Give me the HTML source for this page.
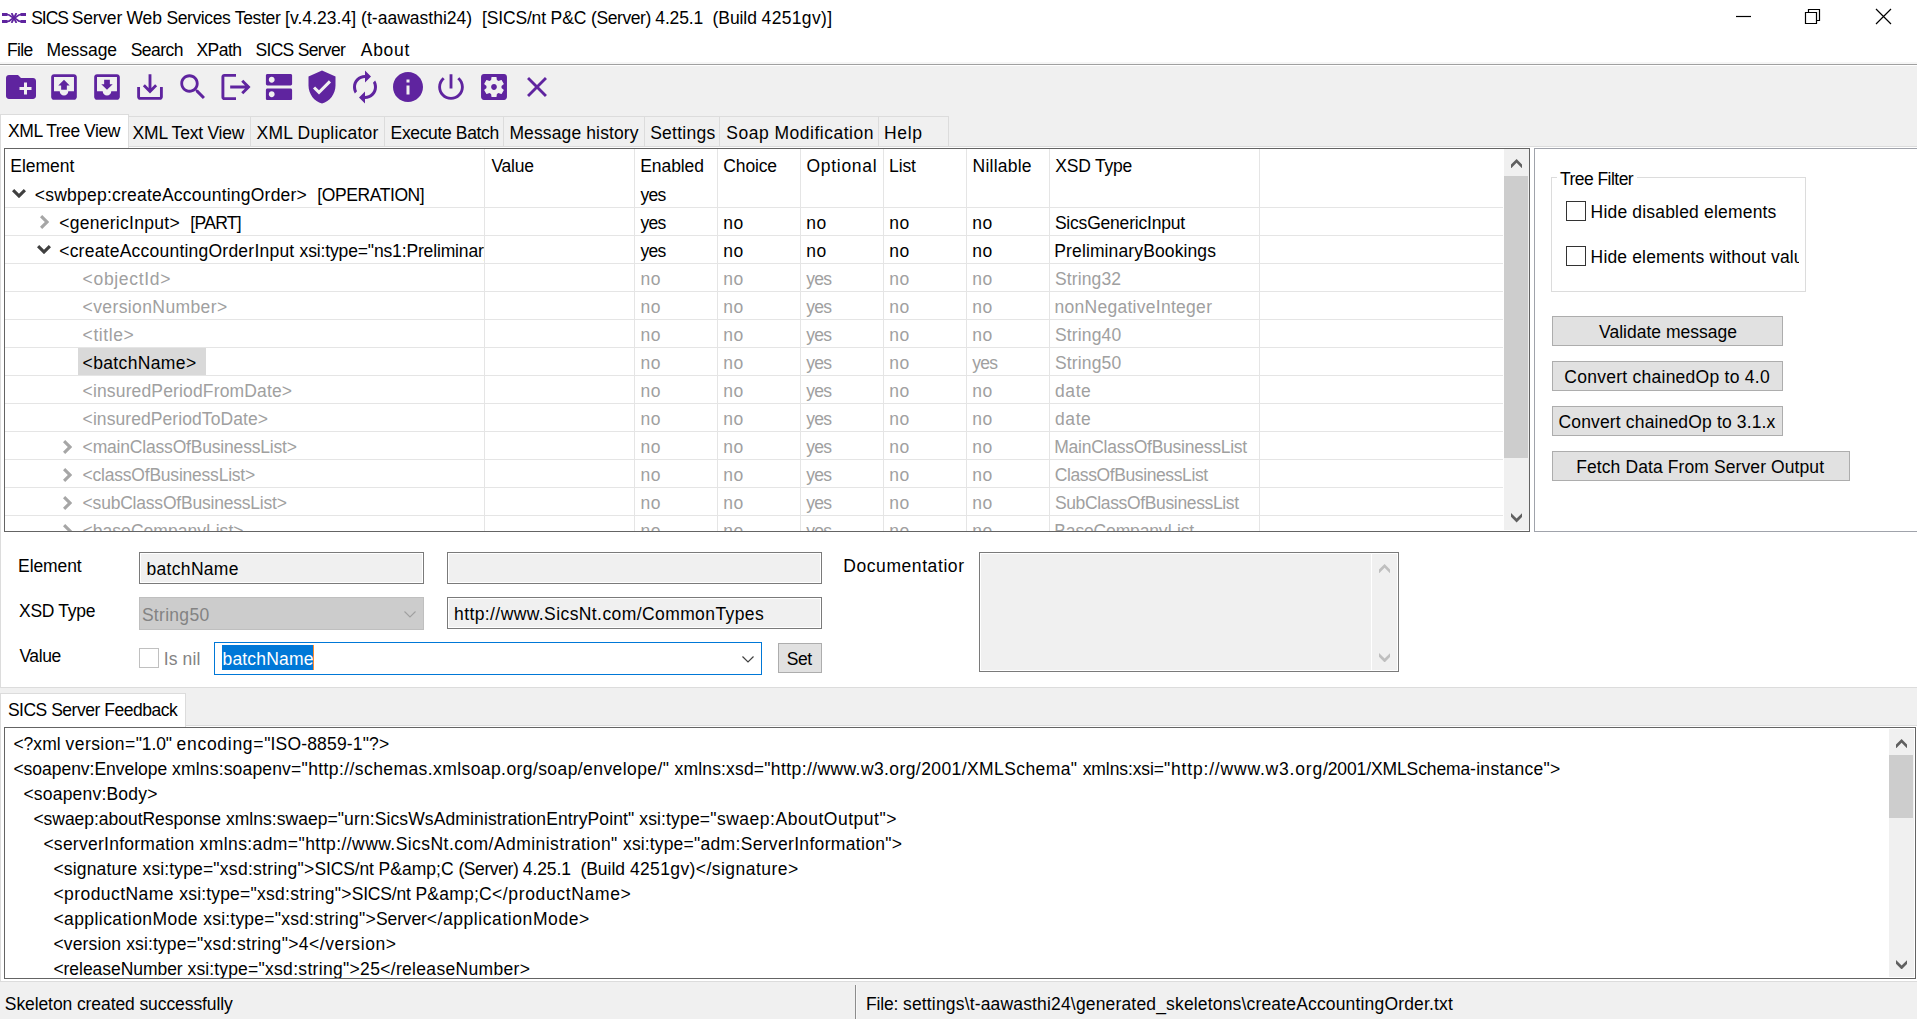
<!DOCTYPE html>
<html lang="en"><head><meta charset="utf-8"><title>SICS Server Web Services Tester</title>
<style>
*{box-sizing:border-box;margin:0;padding:0}
html,body{width:1917px;height:1019px;overflow:hidden;background:#f0f0f0}
body{position:relative;font-family:"Liberation Sans",Arial,sans-serif;font-size:17.5px;line-height:20px;color:#000}
.a{position:absolute;display:block}
.t{position:absolute;white-space:pre;line-height:20px;height:20px}
.ic{position:absolute;top:69px;width:36px;height:36px;fill:#5f249f}
.hl{position:absolute;left:5px;width:1498px;height:1px;background:#e5e5e5}
.vl{position:absolute;top:149px;width:1px;height:382px;background:#e5e5e5}
.tab{position:absolute;top:116px;height:31px;background:#f0f0f0;border:1px solid #dcdcdc}
.btn{position:absolute;background:#e1e1e1;border:1px solid #adadad}
.inp{position:absolute;background:#f0f0f0;border:1px solid #7a7a7a;box-shadow:inset 0 0 0 1px #fff}
.cb{position:absolute;width:20px;height:20px;background:#fff;border:1px solid #333}
.clip{position:absolute;overflow:hidden}
.org{position:absolute;left:0;top:0}
</style></head><body>
<!-- title bar + menu bar -->
<div class="a" style="left:0;top:0;width:1917px;height:64px;background:#fff"></div>
<div class="a" style="left:0;top:62px;width:1917px;height:2px;background:#f6f6f6"></div>
<div class="a" style="left:0;top:64px;width:1917px;height:2px;background:#fff;border-top:1px solid #a0a0a0"></div>
<svg class="a" style="left:2px;top:13px" width="24" height="10" viewBox="0 0 24 10"><g fill="none" stroke="#5f249f"><path d="M0 1.500H5.500M0 8.500H5.500M24 1.500H18.500M24 8.500H18.500" stroke-width="3"/><path d="M5 1.500C9 1.500 9 5 12 5S15 8.500 19 8.500M5 8.500C9 8.500 9 5 12 5S15 1.500 19 1.500" stroke-width="1.700"/><path d="M9.600 0L14.400 10M14.400 0L9.600 10" stroke-width="1.800"/></g></svg>
<svg class="a" style="left:1735px;top:8px" width="160" height="18" viewBox="0 0 160 18"><g fill="none" stroke="#000" stroke-width="1.2"><path d="M1 8.5h15"/><path d="M70.5 4.5h11v11h-11zM73.5 4.5v-3h11v11h-3"/><path d="M141 1l15 15M156 1l-15 15"/></g></svg>
<!-- toolbar -->
<svg class="ic" style="left:3px" viewBox="0.00 0.00 24.00 24.00"><path d="M20 6h-8l-2-2H4c-1.11 0-1.99.89-1.99 2L2 18c0 1.11.89 2 2 2h16c1.11 0 2-.89 2-2V8c0-1.11-.89-2-2-2zm-1 8h-3v3h-2v-3h-3v-2h3V9h2v3h3v2z"/></svg>
<svg class="ic" style="left:46px" viewBox="-0.63 -0.63 25.26 25.26"><path d="M19 3H4.99c-1.11 0-1.98.9-1.98 2L3 19c0 1.1.88 2 1.99 2H19c1.1 0 2-.9 2-2V5c0-1.1-.9-2-2-2zm0 12h-4c0 1.66-1.35 3-3 3s-3-1.34-3-3H4.99V5H19v10zM8 11h2v3h4v-3h2l-4-4-4 4z"/></svg>
<svg class="ic" style="left:89px" viewBox="-0.63 -0.63 25.26 25.26"><path d="M19 3H4.99c-1.11 0-1.98.9-1.98 2L3 19c0 1.1.88 2 1.99 2H19c1.1 0 2-.9 2-2V5c0-1.1-.9-2-2-2zm0 12h-4c0 1.66-1.35 3-3 3s-3-1.34-3-3H4.99V5H19v10zm-3-5h-2V7h-4v3H8l4 4 4-4z"/></svg>
<svg class="ic" style="left:132px" viewBox="-0.63 -0.63 25.26 25.26"><path d="M19 12v7H5v-7H3v7c0 1.1.9 2 2 2h14c1.1 0 2-.9 2-2v-7h-2zm-6 .67l2.59-2.58L17 11.5l-5 5-5-5 1.41-1.41L11 12.67V3h2z"/></svg>
<svg class="ic" style="left:175px" viewBox="-0.77 -0.77 25.53 25.53"><path d="M15.5 14h-.79l-.28-.27C15.41 12.59 16 11.11 16 9.5 16 5.91 13.09 3 9.5 3S3 5.91 3 9.5 5.91 16 9.5 16c1.61 0 3.09-.59 4.23-1.57l.27.28v.79l5 4.99L20.49 19l-4.99-5zm-6 0C7.01 14 5 11.99 5 9.5S7.01 5 9.5 5 14 7.01 14 9.5 11.99 14 9.5 14z"/></svg>
<svg class="ic" style="left:218px" viewBox="-0.37 -0.37 24.74 24.74"><path d="M17 7l-1.41 1.41L18.17 11H8v2h10.17l-2.58 2.58L17 17l5-5zM4 5h8V3H4c-1.1 0-2 .9-2 2v14c0 1.1.9 2 2 2h8v-2H4V5z"/></svg>
<svg class="ic" style="left:261px" viewBox="-0.37 -0.37 24.74 24.74"><path d="M20 13H4c-.55 0-1 .45-1 1v6c0 .55.45 1 1 1h16c.55 0 1-.45 1-1v-6c0-.55-.45-1-1-1zM7 19c-1.1 0-2-.9-2-2s.9-2 2-2 2 .9 2 2-.9 2-2 2zM20 3H4c-.55 0-1 .45-1 1v6c0 .55.45 1 1 1h16c.55 0 1-.45 1-1V4c0-.55-.45-1-1-1zM7 9c-1.1 0-2-.9-2-2s.9-2 2-2 2 .9 2 2-.9 2-2 2z"/></svg>
<svg class="ic" style="left:304px" viewBox="0.00 0.00 24.00 24.00"><path d="M12 1L3 5v6c0 5.55 3.84 10.74 9 12 5.16-1.26 9-6.45 9-12V5l-9-4zm-2 16l-4-4 1.41-1.41L10 14.17l6.59-6.59L18 9l-8 8z"/></svg>
<svg class="ic" style="left:347px" viewBox="0.00 0.00 24.00 24.00"><path d="M12 6v3l4-4-4-4v3c-4.42 0-8 3.58-8 8 0 1.57.46 3.03 1.24 4.26L6.7 14.8c-.45-.83-.7-1.79-.7-2.8 0-3.31 2.69-6 6-6zm6.76 1.74L17.3 9.2c.44.84.7 1.79.7 2.8 0 3.31-2.69 6-6 6v-3l-4 4 4 4v-3c4.42 0 8-3.58 8-8 0-1.57-.46-3.03-1.24-4.26z"/></svg>
<svg class="ic" style="left:390px" viewBox="0.00 0.00 24.00 24.00"><path d="M12 2C6.48 2 2 6.48 2 12s4.48 10 10 10 10-4.48 10-10S17.52 2 12 2zm1 15h-2v-6h2v6zm0-8h-2V7h2v2z"/></svg>
<svg class="ic" style="left:433px" viewBox="-0.63 -0.63 25.26 25.26"><path d="M13 3h-2v10h2V3zm4.83 2.17l-1.42 1.42C17.99 7.86 19 9.81 19 12c0 3.87-3.13 7-7 7s-7-3.13-7-7c0-2.19 1.01-4.14 2.58-5.42L6.17 5.17C4.23 6.82 3 9.26 3 12c0 4.97 4.03 9 9 9s9-4.03 9-9c0-2.74-1.23-5.18-3.17-6.83z"/></svg>
<svg class="ic" style="left:476px" viewBox="-0.50 -0.50 25.00 25.00"><path d="M12 10c-1.1 0-2 .9-2 2s.9 2 2 2 2-.9 2-2-.9-2-2-2zm7-7H5c-1.11 0-2 .9-2 2v14c0 1.1.89 2 2 2h14c1.11 0 2-.9 2-2V5c0-1.1-.89-2-2-2zm-1.750 9c0 .23-.02.46-.05.68l1.48 1.16c.13.11.17.3.08.45l-1.400 2.420c-.09.15-.27.21-.43.15l-1.74-.7c-.36.28-.76.51-1.18.69l-.26 1.850c-.03.17-.18.3-.35.3h-2.800c-.17 0-.32-.13-.35-.29l-.26-1.850c-.43-.18-.82-.41-1.18-.69l-1.74.7c-.16.06-.34 0-.43-.15l-1.400-2.420c-.09-.15-.05-.34.08-.45l1.48-1.160c-.03-.23-.05-.46-.05-.69 0-.23.02-.46.05-.68l-1.480-1.160c-.13-.11-.17-.3-.08-.45l1.400-2.420c.09-.15.27-.21.43-.15l1.74.7c.36-.28.76-.51 1.180-.69l.26-1.850c.03-.17.18-.3.35-.3h2.800c.17 0 .32.13.35.29l.26 1.850c.43.18.82.41 1.180.69l1.740-.7c.16-.06.34 0 .43.15l1.400 2.420c.09.15.05.34-.08.45l-1.480 1.160c.03.23.05.46.05.69z"/></svg>
<svg class="ic" style="left:519px" viewBox="-0.63 -0.63 25.26 25.26"><path d="M19 6.41L17.59 5 12 10.59 6.41 5 5 6.41 10.59 12 5 17.59 6.41 19 12 13.41 17.59 19 19 17.59 13.41 12z"/></svg>
<!-- upper tab control -->
<div class="a" style="left:0;top:146px;width:1917px;height:542px;background:#fff;border:1px solid #dcdcdc;border-right:none"></div>
<div class="tab" style="left:128px;width:123px"></div><div class="tab" style="left:250px;width:135px"></div><div class="tab" style="left:384px;width:120px"></div><div class="tab" style="left:503px;width:142px"></div><div class="tab" style="left:644px;width:76px"></div><div class="tab" style="left:719px;width:160px"></div><div class="tab" style="left:878px;width:71px"></div>
<div class="a" style="left:0;top:114px;width:129px;height:34px;background:#fff;border:1px solid #dcdcdc;border-bottom:none"></div>
<!-- tree panel -->
<div class="a" style="left:4px;top:148px;width:1526px;height:384px;border:1px solid #646464"></div>
<div class="clip" style="left:5px;top:149px;width:1499px;height:382px"><div class="org" style="left:-5px;top:-149px"><div class="hl" style="top:207px"></div><div class="hl" style="top:235px"></div><div class="hl" style="top:263px"></div><div class="hl" style="top:291px"></div><div class="hl" style="top:319px"></div><div class="hl" style="top:347px"></div><div class="hl" style="top:375px"></div><div class="hl" style="top:403px"></div><div class="hl" style="top:431px"></div><div class="hl" style="top:459px"></div><div class="hl" style="top:487px"></div><div class="hl" style="top:515px"></div><div class="vl" style="left:484px"></div><div class="vl" style="left:634px"></div><div class="vl" style="left:717px"></div><div class="vl" style="left:800px"></div><div class="vl" style="left:883px"></div><div class="vl" style="left:966px"></div><div class="vl" style="left:1049px"></div><div class="vl" style="left:1259px"></div>
<div class="a" style="left:78px;top:348px;width:128px;height:27px;background:#d9d9d9"></div>
<svg class="a" style="left:12.10px;top:189.20px" width="14" height="9.2" viewBox="0 0 14 9.2"><polygon points="0,2.2 2.2,0 7,4.8 11.8,0 14,2.2 7,9.2" fill="#404040"/></svg><svg class="a" style="left:39.70px;top:215.40px" width="9.2" height="14" viewBox="0 0 9.2 14"><polygon points="2.2,0 0,2.2 4.8,7 0,11.8 2.2,14 9.2,7" fill="#a6a6a6"/></svg><svg class="a" style="left:36.60px;top:245.30px" width="14" height="9.2" viewBox="0 0 14 9.2"><polygon points="0,2.2 2.2,0 7,4.8 11.8,0 14,2.2 7,9.2" fill="#404040"/></svg>
<svg class="a" style="left:63.30px;top:439.60px" width="9.2" height="14" viewBox="0 0 9.2 14"><polygon points="2.2,0 0,2.2 4.8,7 0,11.8 2.2,14 9.2,7" fill="#a6a6a6"/></svg><svg class="a" style="left:63.30px;top:467.60px" width="9.2" height="14" viewBox="0 0 9.2 14"><polygon points="2.2,0 0,2.2 4.8,7 0,11.8 2.2,14 9.2,7" fill="#a6a6a6"/></svg><svg class="a" style="left:63.30px;top:495.60px" width="9.2" height="14" viewBox="0 0 9.2 14"><polygon points="2.2,0 0,2.2 4.8,7 0,11.8 2.2,14 9.2,7" fill="#a6a6a6"/></svg><svg class="a" style="left:63.30px;top:523.60px" width="9.2" height="14" viewBox="0 0 9.2 14"><polygon points="2.2,0 0,2.2 4.8,7 0,11.8 2.2,14 9.2,7" fill="#a6a6a6"/></svg>
</div></div>
<div class="a" style="left:1504px;top:149px;width:25px;height:381px;background:#f0f0f0"></div>
<div class="a" style="left:1504px;top:176px;width:24px;height:282px;background:#cdcdcd"></div>
<svg class="a" style="left:1510.80px;top:158.75px" width="11.2" height="9.45" viewBox="0 0 11.2 9.45"><polygon points="5.6,0 11.2,5.6 11.2,9.45 5.6,3.85 0,9.45 0,5.6" fill="#606060"/></svg><svg class="a" style="left:1510.90px;top:513.45px" width="11.2" height="9.45" viewBox="0 0 11.2 9.45"><polygon points="5.6,9.45 11.2,3.85 11.2,0 5.6,5.6 0,0 0,3.85" fill="#606060"/></svg>
<div class="clip" style="left:5px;top:149px;width:479px;height:382px"><div class="org" style="left:-5px;top:-149px">
<span class="t" style="left:34.8px;top:185px;letter-spacing:0.222px;">&lt;swbpep:createAccountingOrder&gt;  </span>
<span class="t" style="left:317.3px;top:185px;letter-spacing:-0.410px;">[OPERATION]</span>
<span class="t" style="left:59.2px;top:213px;letter-spacing:0.283px;">&lt;genericInput&gt;  </span>
<span class="t" style="left:190.3px;top:213px;letter-spacing:-0.680px;">[PART]</span>
<span class="t" style="left:59.2px;top:241px;letter-spacing:0.228px;">&lt;createAccountingOrderInput </span>
<span class="t" style="left:299.6px;top:241px;letter-spacing:-0.145px;">xsi:type="ns1:PreliminaryBookings"&gt;</span>
<span class="t" style="left:82.6px;top:269px;letter-spacing:0.676px;color:#a0a0a0;">&lt;objectId&gt;</span>
<span class="t" style="left:82.6px;top:297px;letter-spacing:0.393px;color:#a0a0a0;">&lt;versionNumber&gt;</span>
<span class="t" style="left:82.6px;top:325px;letter-spacing:0.588px;color:#a0a0a0;">&lt;title&gt;</span>
<span class="t" style="left:82.6px;top:353px;letter-spacing:0.358px;">&lt;batchName&gt;</span>
<span class="t" style="left:82.6px;top:381px;letter-spacing:0.145px;color:#a0a0a0;">&lt;insuredPeriodFromDate&gt;</span>
<span class="t" style="left:82.6px;top:409px;letter-spacing:0.072px;color:#a0a0a0;">&lt;insuredPeriodToDate&gt;</span>
<span class="t" style="left:82.6px;top:437px;letter-spacing:-0.185px;color:#a0a0a0;">&lt;mainClassOfBusinessList&gt;</span>
<span class="t" style="left:82.6px;top:465px;letter-spacing:-0.221px;color:#a0a0a0;">&lt;classOfBusinessList&gt;</span>
<span class="t" style="left:82.6px;top:493px;letter-spacing:-0.210px;color:#a0a0a0;">&lt;subClassOfBusinessList&gt;</span>
<span class="t" style="left:82.6px;top:521px;letter-spacing:0.024px;color:#a0a0a0;">&lt;baseCompanyList&gt;</span>
</div></div>
<div class="clip" style="left:485px;top:149px;width:1019px;height:382px"><div class="org" style="left:-485px;top:-149px">
<span class="t" style="left:640.4px;top:185px;letter-spacing:-0.700px;">yes</span>
<span class="t" style="left:640.4px;top:213px;letter-spacing:-0.700px;">yes</span>
<span class="t" style="left:723.2px;top:213px;letter-spacing:0.700px;">no</span>
<span class="t" style="left:806.2px;top:213px;letter-spacing:0.700px;">no</span>
<span class="t" style="left:889.2px;top:213px;letter-spacing:0.700px;">no</span>
<span class="t" style="left:972.2px;top:213px;letter-spacing:0.700px;">no</span>
<span class="t" style="left:1054.9px;top:213px;letter-spacing:-0.203px;">SicsGenericInput</span>
<span class="t" style="left:640.4px;top:241px;letter-spacing:-0.700px;">yes</span>
<span class="t" style="left:723.2px;top:241px;letter-spacing:0.700px;">no</span>
<span class="t" style="left:806.2px;top:241px;letter-spacing:0.700px;">no</span>
<span class="t" style="left:889.2px;top:241px;letter-spacing:0.700px;">no</span>
<span class="t" style="left:972.2px;top:241px;letter-spacing:0.700px;">no</span>
<span class="t" style="left:1054.3px;top:241px;letter-spacing:0.120px;">PreliminaryBookings</span>
<span class="t" style="left:640.4px;top:269px;letter-spacing:0.700px;color:#a0a0a0;">no</span>
<span class="t" style="left:723.2px;top:269px;letter-spacing:0.700px;color:#a0a0a0;">no</span>
<span class="t" style="left:806.2px;top:269px;letter-spacing:-0.700px;color:#a0a0a0;">yes</span>
<span class="t" style="left:889.2px;top:269px;letter-spacing:0.700px;color:#a0a0a0;">no</span>
<span class="t" style="left:972.2px;top:269px;letter-spacing:0.700px;color:#a0a0a0;">no</span>
<span class="t" style="left:1054.9px;top:269px;letter-spacing:0.141px;color:#a0a0a0;">String32</span>
<span class="t" style="left:640.4px;top:297px;letter-spacing:0.700px;color:#a0a0a0;">no</span>
<span class="t" style="left:723.2px;top:297px;letter-spacing:0.700px;color:#a0a0a0;">no</span>
<span class="t" style="left:806.2px;top:297px;letter-spacing:-0.700px;color:#a0a0a0;">yes</span>
<span class="t" style="left:889.2px;top:297px;letter-spacing:0.700px;color:#a0a0a0;">no</span>
<span class="t" style="left:972.2px;top:297px;letter-spacing:0.700px;color:#a0a0a0;">no</span>
<span class="t" style="left:1054.5px;top:297px;letter-spacing:0.277px;color:#a0a0a0;">nonNegativeInteger</span>
<span class="t" style="left:640.4px;top:325px;letter-spacing:0.700px;color:#a0a0a0;">no</span>
<span class="t" style="left:723.2px;top:325px;letter-spacing:0.700px;color:#a0a0a0;">no</span>
<span class="t" style="left:806.2px;top:325px;letter-spacing:-0.700px;color:#a0a0a0;">yes</span>
<span class="t" style="left:889.2px;top:325px;letter-spacing:0.700px;color:#a0a0a0;">no</span>
<span class="t" style="left:972.2px;top:325px;letter-spacing:0.700px;color:#a0a0a0;">no</span>
<span class="t" style="left:1054.9px;top:325px;letter-spacing:0.156px;color:#a0a0a0;">String40</span>
<span class="t" style="left:640.4px;top:353px;letter-spacing:0.700px;color:#a0a0a0;">no</span>
<span class="t" style="left:723.2px;top:353px;letter-spacing:0.700px;color:#a0a0a0;">no</span>
<span class="t" style="left:806.2px;top:353px;letter-spacing:-0.700px;color:#a0a0a0;">yes</span>
<span class="t" style="left:889.2px;top:353px;letter-spacing:0.700px;color:#a0a0a0;">no</span>
<span class="t" style="left:972.2px;top:353px;letter-spacing:-0.700px;color:#a0a0a0;">yes</span>
<span class="t" style="left:1054.9px;top:353px;letter-spacing:0.156px;color:#a0a0a0;">String50</span>
<span class="t" style="left:640.4px;top:381px;letter-spacing:0.700px;color:#a0a0a0;">no</span>
<span class="t" style="left:723.2px;top:381px;letter-spacing:0.700px;color:#a0a0a0;">no</span>
<span class="t" style="left:806.2px;top:381px;letter-spacing:-0.700px;color:#a0a0a0;">yes</span>
<span class="t" style="left:889.2px;top:381px;letter-spacing:0.700px;color:#a0a0a0;">no</span>
<span class="t" style="left:972.2px;top:381px;letter-spacing:0.700px;color:#a0a0a0;">no</span>
<span class="t" style="left:1055.0px;top:381px;letter-spacing:0.583px;color:#a0a0a0;">date</span>
<span class="t" style="left:640.4px;top:409px;letter-spacing:0.700px;color:#a0a0a0;">no</span>
<span class="t" style="left:723.2px;top:409px;letter-spacing:0.700px;color:#a0a0a0;">no</span>
<span class="t" style="left:806.2px;top:409px;letter-spacing:-0.700px;color:#a0a0a0;">yes</span>
<span class="t" style="left:889.2px;top:409px;letter-spacing:0.700px;color:#a0a0a0;">no</span>
<span class="t" style="left:972.2px;top:409px;letter-spacing:0.700px;color:#a0a0a0;">no</span>
<span class="t" style="left:1055.0px;top:409px;letter-spacing:0.583px;color:#a0a0a0;">date</span>
<span class="t" style="left:640.4px;top:437px;letter-spacing:0.700px;color:#a0a0a0;">no</span>
<span class="t" style="left:723.2px;top:437px;letter-spacing:0.700px;color:#a0a0a0;">no</span>
<span class="t" style="left:806.2px;top:437px;letter-spacing:-0.700px;color:#a0a0a0;">yes</span>
<span class="t" style="left:889.2px;top:437px;letter-spacing:0.700px;color:#a0a0a0;">no</span>
<span class="t" style="left:972.2px;top:437px;letter-spacing:0.700px;color:#a0a0a0;">no</span>
<span class="t" style="left:1054.3px;top:437px;letter-spacing:-0.252px;color:#a0a0a0;">MainClassOfBusinessList</span>
<span class="t" style="left:640.4px;top:465px;letter-spacing:0.700px;color:#a0a0a0;">no</span>
<span class="t" style="left:723.2px;top:465px;letter-spacing:0.700px;color:#a0a0a0;">no</span>
<span class="t" style="left:806.2px;top:465px;letter-spacing:-0.700px;color:#a0a0a0;">yes</span>
<span class="t" style="left:889.2px;top:465px;letter-spacing:0.700px;color:#a0a0a0;">no</span>
<span class="t" style="left:972.2px;top:465px;letter-spacing:0.700px;color:#a0a0a0;">no</span>
<span class="t" style="left:1054.8px;top:465px;letter-spacing:-0.398px;color:#a0a0a0;">ClassOfBusinessList</span>
<span class="t" style="left:640.4px;top:493px;letter-spacing:0.700px;color:#a0a0a0;">no</span>
<span class="t" style="left:723.2px;top:493px;letter-spacing:0.700px;color:#a0a0a0;">no</span>
<span class="t" style="left:806.2px;top:493px;letter-spacing:-0.700px;color:#a0a0a0;">yes</span>
<span class="t" style="left:889.2px;top:493px;letter-spacing:0.700px;color:#a0a0a0;">no</span>
<span class="t" style="left:972.2px;top:493px;letter-spacing:0.700px;color:#a0a0a0;">no</span>
<span class="t" style="left:1054.9px;top:493px;letter-spacing:-0.352px;color:#a0a0a0;">SubClassOfBusinessList</span>
<span class="t" style="left:640.4px;top:521px;letter-spacing:0.700px;color:#a0a0a0;">no</span>
<span class="t" style="left:723.2px;top:521px;letter-spacing:0.700px;color:#a0a0a0;">no</span>
<span class="t" style="left:806.2px;top:521px;letter-spacing:-0.700px;color:#a0a0a0;">yes</span>
<span class="t" style="left:889.2px;top:521px;letter-spacing:0.700px;color:#a0a0a0;">no</span>
<span class="t" style="left:972.2px;top:521px;letter-spacing:0.700px;color:#a0a0a0;">no</span>
<span class="t" style="left:1054.3px;top:521px;letter-spacing:-0.155px;color:#a0a0a0;">BaseCompanyList</span>
</div></div>
<!-- right panel -->
<div class="a" style="left:1534px;top:148px;width:390px;height:384px;background:#fff;border:1px solid #a0a3ab"></div>
<div class="a" style="left:1551px;top:177px;width:255px;height:115px;border:1px solid #dcdcdc"></div>
<div class="a" style="left:1557px;top:170px;width:80px;height:20px;background:#fff"></div>
<div class="cb" style="left:1566px;top:201px"></div>
<div class="cb" style="left:1566px;top:246px"></div>
<div class="clip" style="left:1590px;top:240px;width:209px;height:30px"><div class="org" style="left:-1590px;top:-240px"><span class="t" style="left:1590.6px;top:247px;letter-spacing:0.154px;">Hide elements without value</span></div></div>
<div class="btn" style="left:1552px;top:316px;width:231px;height:30px"></div>
<div class="btn" style="left:1552px;top:361px;width:231px;height:30px"></div>
<div class="btn" style="left:1552px;top:406px;width:231px;height:30px"></div>
<div class="btn" style="left:1552px;top:451px;width:298px;height:30px"></div>
<!-- element form -->
<div class="inp" style="left:139px;top:552px;width:285px;height:32px"></div>
<div class="inp" style="left:447px;top:552px;width:375px;height:32px"></div>
<div class="a" style="left:139px;top:597px;width:285px;height:33px;background:#ccc;border:1px solid #bfbfbf"></div>
<svg class="a" style="left:403.25px;top:609.5px" width="14" height="9" viewBox="0 0 14 9"><path d="M1.5 1.5 L7 7 L12.5 1.5" fill="none" stroke="#a0a0a0" stroke-width="1.1"/></svg>
<div class="inp" style="left:447px;top:597px;width:375px;height:32px"></div>
<div class="a" style="left:139px;top:648px;width:20px;height:20px;background:#fff;border:1px solid #c0c0c0"></div>
<div class="a" style="left:214px;top:642px;width:548px;height:33px;background:#fff;border:1px solid #0078d7"></div>
<div class="a" style="left:222px;top:645px;width:92px;height:25px;background:#0078d7;border-right:1px solid #ff8a2a"></div>
<svg class="a" style="left:741.3px;top:654.75px" width="14" height="9" viewBox="0 0 14 9"><path d="M1.5 1.5 L7 7 L12.5 1.5" fill="none" stroke="#404040" stroke-width="1.2"/></svg>
<div class="btn" style="left:778px;top:643px;width:44px;height:30px"></div>
<div class="inp" style="left:979px;top:552px;width:420px;height:120px"></div>
<div class="a" style="left:1371px;top:554px;width:1px;height:116px;background:#fff"></div>
<svg class="a" style="left:1378.90px;top:563.90px" width="11.2" height="9.45" viewBox="0 0 11.2 9.45"><polygon points="5.6,0 11.2,5.6 11.2,9.45 5.6,3.85 0,9.45 0,5.6" fill="#bfbfbf"/></svg><svg class="a" style="left:1378.90px;top:652.55px" width="11.2" height="9.45" viewBox="0 0 11.2 9.45"><polygon points="5.6,9.45 11.2,3.85 11.2,0 5.6,5.6 0,0 0,3.85" fill="#bfbfbf"/></svg>
<!-- lower tab control -->
<div class="a" style="left:0;top:725px;width:1917px;height:257px;background:#fff;border:1px solid #dcdcdc;border-right:none"></div>
<div class="a" style="left:0;top:693px;width:186px;height:34px;background:#fff;border:1px solid #dcdcdc;border-bottom:none"></div>
<div class="a" style="left:4px;top:727px;width:1912px;height:252px;border:1px solid #646464"></div>
<div class="a" style="left:1889px;top:729px;width:25px;height:248px;background:#f0f0f0"></div>
<div class="a" style="left:1889px;top:755px;width:24px;height:63px;background:#cdcdcd"></div>
<svg class="a" style="left:1895.90px;top:738.80px" width="11.2" height="9.45" viewBox="0 0 11.2 9.45"><polygon points="5.6,0 11.2,5.6 11.2,9.45 5.6,3.85 0,9.45 0,5.6" fill="#606060"/></svg><svg class="a" style="left:1895.90px;top:959.55px" width="11.2" height="9.45" viewBox="0 0 11.2 9.45"><polygon points="5.6,9.45 11.2,3.85 11.2,0 5.6,5.6 0,0 0,3.85" fill="#606060"/></svg>
<div class="clip" style="left:5px;top:728px;width:1884px;height:250px"><div class="org" style="left:-5px;top:-728px">
<span class="t" style="left:13.4px;top:734px;letter-spacing:0.012px;">&lt;?xml </span>
<span class="t" style="left:65.5px;top:734px;letter-spacing:0.447px;">version=</span>
<span class="t" style="left:135.8px;top:734px;letter-spacing:-0.137px;">"1.0" </span>
<span class="t" style="left:176.6px;top:734px;letter-spacing:0.704px;">encoding=</span>
<span class="t" style="left:264.2px;top:734px;letter-spacing:0.166px;">"ISO-8859-1"?&gt;</span>
<span class="t" style="left:13.4px;top:759px;letter-spacing:-0.024px;">&lt;soapenv:Envelope </span>
<span class="t" style="left:172.1px;top:759px;letter-spacing:0.171px;">xmlns:soapenv=</span>
<span class="t" style="left:301.5px;top:759px;letter-spacing:0.416px;">"http://schemas.xmlsoap.org/soap/envelope/" </span>
<span class="t" style="left:674.6px;top:759px;letter-spacing:0.154px;">xmlns:xsd=</span>
<span class="t" style="left:764.2px;top:759px;letter-spacing:0.409px;">"http://www.w3.org/2001/XMLSchema" </span>
<span class="t" style="left:1082.7px;top:759px;letter-spacing:-0.092px;">xmlns:xsi=</span>
<span class="t" style="left:1164.0px;top:759px;letter-spacing:0.818px;">"http://www.w3.org</span>
<span class="t" style="left:1323.0px;top:759px;letter-spacing:-0.115px;">/2001/XMLSchema</span>
<span class="t" style="left:1470.1px;top:759px;letter-spacing:0.278px;">-instance"&gt;</span>
<span class="t" style="left:23.4px;top:784px;letter-spacing:0.204px;">&lt;soapenv:Body&gt;</span>
<span class="t" style="left:33.4px;top:809px;letter-spacing:-0.031px;">&lt;swaep:aboutResponse </span>
<span class="t" style="left:225.9px;top:809px;letter-spacing:0.040px;">xmlns:swaep=</span>
<span class="t" style="left:337.8px;top:809px;letter-spacing:0.112px;">"urn:SicsWsAdministrationEntryPoint" </span>
<span class="t" style="left:639.3px;top:809px;letter-spacing:0.143px;">xsi:type=</span>
<span class="t" style="left:710.2px;top:809px;letter-spacing:0.518px;">"swaep:AboutOutput"&gt;</span>
<span class="t" style="left:43.4px;top:834px;letter-spacing:0.259px;">&lt;serverInformation </span>
<span class="t" style="left:199.6px;top:834px;letter-spacing:0.402px;">xmlns:adm=</span>
<span class="t" style="left:298.5px;top:834px;letter-spacing:0.447px;">"http://www.SicsNt.com/Administration" </span>
<span class="t" style="left:623.0px;top:834px;letter-spacing:0.143px;">xsi:type=</span>
<span class="t" style="left:693.9px;top:834px;letter-spacing:0.329px;">"adm:ServerInformation"&gt;</span>
<span class="t" style="left:53.4px;top:859px;letter-spacing:0.181px;">&lt;signature </span>
<span class="t" style="left:142.5px;top:859px;letter-spacing:0.132px;">xsi:type=</span>
<span class="t" style="left:213.3px;top:859px;letter-spacing:0.292px;">"xsd:string"&gt;</span>
<span class="t" style="left:314.6px;top:859px;letter-spacing:-0.152px;">SICS/nt </span>
<span class="t" style="left:378.6px;top:859px;letter-spacing:0.013px;">P&amp;amp;C </span>
<span class="t" style="left:458.4px;top:859px;letter-spacing:-0.409px;">(Server) </span>
<span class="t" style="left:522.8px;top:859px;letter-spacing:-0.097px;">4.25.1  </span>
<span class="t" style="left:580.4px;top:859px;letter-spacing:-0.018px;">(Build </span>
<span class="t" style="left:629.9px;top:859px;letter-spacing:0.384px;">4251gv)</span>
<span class="t" style="left:695.8px;top:859px;letter-spacing:0.456px;">&lt;/signature&gt;</span>
<span class="t" style="left:53.4px;top:884px;letter-spacing:0.440px;">&lt;productName </span>
<span class="t" style="left:179.3px;top:884px;letter-spacing:0.166px;">xsi:type=</span>
<span class="t" style="left:250.4px;top:884px;letter-spacing:0.292px;">"xsd:string"&gt;</span>
<span class="t" style="left:351.7px;top:884px;letter-spacing:-0.189px;">SICS/nt </span>
<span class="t" style="left:415.4px;top:884px;letter-spacing:0.240px;">P&amp;amp;C</span>
<span class="t" style="left:491.9px;top:884px;letter-spacing:0.658px;">&lt;/productName&gt;</span>
<span class="t" style="left:53.4px;top:909px;letter-spacing:0.431px;">&lt;applicationMode </span>
<span class="t" style="left:203.3px;top:909px;letter-spacing:0.199px;">xsi:type=</span>
<span class="t" style="left:274.7px;top:909px;letter-spacing:0.292px;">"xsd:string"&gt;</span>
<span class="t" style="left:376.0px;top:909px;letter-spacing:-0.136px;">Server</span>
<span class="t" style="left:426.7px;top:909px;letter-spacing:0.575px;">&lt;/applicationMode&gt;</span>
<span class="t" style="left:53.4px;top:934px;letter-spacing:0.141px;">&lt;version </span>
<span class="t" style="left:126.2px;top:934px;letter-spacing:0.132px;">xsi:type=</span>
<span class="t" style="left:197.0px;top:934px;letter-spacing:0.323px;">"xsd:string"&gt;</span>
<span class="t" style="left:298.7px;top:934px;letter-spacing:0.590px;">4&lt;/version&gt;</span>
<span class="t" style="left:53.4px;top:959px;letter-spacing:-0.045px;">&lt;releaseNumber </span>
<span class="t" style="left:187.5px;top:959px;letter-spacing:0.143px;">xsi:type=</span>
<span class="t" style="left:258.4px;top:959px;letter-spacing:0.324px;">"xsd:string"&gt;</span>
<span class="t" style="left:360.1px;top:959px;letter-spacing:0.319px;">25&lt;/releaseNumber&gt;</span>
</div></div>
<!-- status bar -->
<div class="a" style="left:855px;top:985px;width:2px;height:34px;background:#f8f8f8;border-left:1px solid #8c8c8c"></div>
<!-- labels -->
<span class="t" style="left:31.2px;top:8px;letter-spacing:-1.024px;">SICS </span>
<span class="t" style="left:71.8px;top:8px;letter-spacing:-0.227px;">Server </span>
<span class="t" style="left:126.6px;top:8px;letter-spacing:-0.187px;">Web </span>
<span class="t" style="left:166.4px;top:8px;letter-spacing:-0.396px;">Services </span>
<span class="t" style="left:234.8px;top:8px;letter-spacing:-0.341px;">Tester </span>
<span class="t" style="left:285.0px;top:8px;letter-spacing:0.055px;">[v.4.23.4] </span>
<span class="t" style="left:361.1px;top:8px;letter-spacing:0.014px;">(t-aawasthi24)  </span>
<span class="t" style="left:482.0px;top:8px;letter-spacing:-0.158px;">[SICS/nt </span>
<span class="t" style="left:550.6px;top:8px;letter-spacing:-0.102px;">P&amp;C </span>
<span class="t" style="left:591.0px;top:8px;letter-spacing:-0.420px;">(Server) </span>
<span class="t" style="left:655.3px;top:8px;letter-spacing:-0.134px;">4.25.1  </span>
<span class="t" style="left:712.6px;top:8px;letter-spacing:-0.089px;">(Build </span>
<span class="t" style="left:761.6px;top:8px;letter-spacing:0.334px;">4251gv)]</span>
<span class="t" style="left:6.9px;top:40px;letter-spacing:-0.630px;">File</span>
<span class="t" style="left:46.4px;top:40px;letter-spacing:-0.050px;">Message</span>
<span class="t" style="left:130.7px;top:40px;letter-spacing:-0.544px;">Search</span>
<span class="t" style="left:196.4px;top:40px;letter-spacing:-0.489px;">XPath</span>
<span class="t" style="left:255.5px;top:40px;letter-spacing:-0.700px;">SICS Server</span>
<span class="t" style="left:360.8px;top:40px;letter-spacing:0.700px;">About</span>
<span class="t" style="left:8.1px;top:121px;letter-spacing:-0.454px;">XML Tree View</span>
<span class="t" style="left:132.6px;top:123px;letter-spacing:-0.217px;">XML Text View</span>
<span class="t" style="left:256.6px;top:123px;letter-spacing:0.208px;">XML Duplicator</span>
<span class="t" style="left:390.6px;top:123px;letter-spacing:-0.357px;">Execute Batch</span>
<span class="t" style="left:509.4px;top:123px;letter-spacing:0.125px;">Message history</span>
<span class="t" style="left:650.2px;top:123px;letter-spacing:0.256px;">Settings</span>
<span class="t" style="left:726.3px;top:123px;letter-spacing:0.500px;">Soap Modification</span>
<span class="t" style="left:883.9px;top:123px;letter-spacing:0.700px;">Help</span>
<span class="t" style="left:10.3px;top:156px;letter-spacing:-0.040px;">Element</span>
<span class="t" style="left:491.4px;top:156px;letter-spacing:-0.229px;">Value</span>
<span class="t" style="left:640.3px;top:156px;letter-spacing:-0.095px;">Enabled</span>
<span class="t" style="left:723.3px;top:156px;letter-spacing:-0.144px;">Choice</span>
<span class="t" style="left:806.5px;top:156px;letter-spacing:0.700px;">Optional</span>
<span class="t" style="left:889.1px;top:156px;letter-spacing:-0.124px;">List</span>
<span class="t" style="left:972.6px;top:156px;letter-spacing:0.218px;">Nillable</span>
<span class="t" style="left:1055.3px;top:156px;letter-spacing:-0.214px;">XSD Type</span>
<span class="t" style="left:1559.9px;top:169px;letter-spacing:-0.531px;">Tree Filter</span>
<span class="t" style="left:1590.6px;top:202px;letter-spacing:0.183px;">Hide disabled elements</span>
<span class="t" style="left:1599.1px;top:322px;">Validate message</span>
<span class="t" style="left:1564.3px;top:367px;letter-spacing:0.258px;">Convert chainedOp to 4.0</span>
<span class="t" style="left:1558.5px;top:412px;letter-spacing:0.153px;">Convert chainedOp to 3.1.x</span>
<span class="t" style="left:1576.2px;top:457px;letter-spacing:0.099px;">Fetch Data From Server Output</span>
<span class="t" style="left:18.1px;top:556px;letter-spacing:-0.107px;">Element</span>
<span class="t" style="left:146.5px;top:559px;letter-spacing:0.313px;">batchName</span>
<span class="t" style="left:19.1px;top:601px;letter-spacing:-0.314px;">XSD Type</span>
<span class="t" style="left:141.9px;top:605px;letter-spacing:0.299px;color:#838383;">String50</span>
<span class="t" style="left:454.0px;top:604px;letter-spacing:0.410px;">http://www.SicsNt.com/CommonTypes</span>
<span class="t" style="left:19.4px;top:646px;letter-spacing:-0.404px;">Value</span>
<span class="t" style="left:163.7px;top:649px;letter-spacing:0.140px;color:#838383;">Is nil</span>
<span class="t" style="left:222.5px;top:649px;letter-spacing:0.176px;color:#fff;">batchName</span>
<span class="t" style="left:786.8px;top:649px;letter-spacing:-0.429px;">Set</span>
<span class="t" style="left:843.2px;top:556px;letter-spacing:0.584px;">Documentatior</span>
<span class="t" style="left:7.9px;top:700px;letter-spacing:-0.484px;">SICS Server Feedback</span>
<span class="t" style="left:4.8px;top:994px;letter-spacing:-0.090px;">Skeleton created successfully</span>
<span class="t" style="left:865.9px;top:994px;letter-spacing:-0.132px;">File: </span>
<span class="t" style="left:903.0px;top:994px;letter-spacing:0.165px;">settings\t-aawasthi24\generated_skeletons\createAccountingOrder.txt</span>
</body></html>
